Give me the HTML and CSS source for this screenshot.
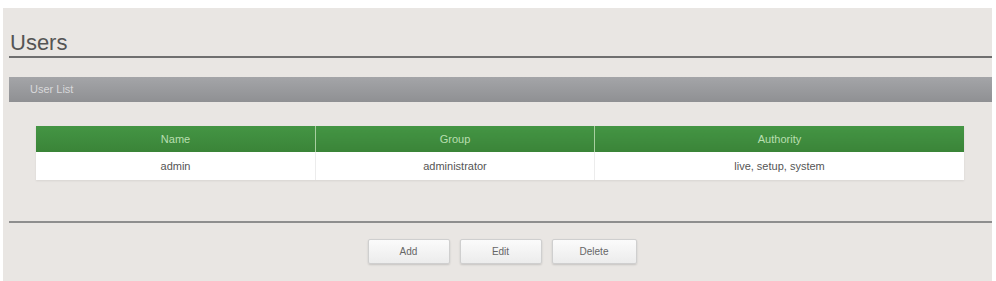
FILE: index.html
```html
<!DOCTYPE html>
<html lang="en">
<head>
    <meta charset="UTF-8">
    <title>Users</title>
    <link rel="stylesheet" href="styles.css">
</head>
<body>
    <div class="panel">
        <h1 class="page-title">Users</h1>

        <div class="section-bar">User List</div>

        <table class="user-table">
            <thead>
                <tr>
                    <th class="col-name">Name</th>
                    <th class="col-group">Group</th>
                    <th>Authority</th>
                </tr>
            </thead>
            <tbody>
                <tr>
                    <td>admin</td>
                    <td>administrator</td>
                    <td>live, setup, system</td>
                </tr>
            </tbody>
        </table>

        <div class="separator"></div>

        <div class="actions">
            <button class="btn">Add</button>
            <button class="btn">Edit</button>
            <button class="btn btn-wide">Delete</button>
        </div>
    </div>
</body>
</html>
```

FILE: styles.css
```css
body {
    margin: 0;
    padding: 0;
    background-color: #fff;
    font-family: "Liberation Sans", Arial, sans-serif;
}

.panel {
    margin: 8px 4px 0 3px;
    height: 273px;
    padding: 0 0 0 6px;
    background-color: #e9e6e3;
    box-sizing: border-box;
}

.page-title {
    margin: 0;
    padding: 22px 0 0 1px;
    font-size: 22px;
    font-weight: normal;
    line-height: 26px;
    color: #555;
    border-bottom: 2px solid #6f6f6f;
}

.section-bar {
    margin-top: 19px;
    height: 25px;
    line-height: 25px;
    padding-left: 21px;
    font-size: 11px;
    color: #d8d8da;
    background: linear-gradient(#a4a5a8, #8f9093);
}

.user-table {
    margin: 24px 0 0 27px;
    width: 928px;
    border-collapse: collapse;
    font-size: 11px;
    background-color: #fff;
    box-shadow: 0 1px 2px rgba(0, 0, 0, 0.08);
}

.user-table th {
    height: 26px;
    padding: 0;
    font-weight: normal;
    color: #b9dfb0;
    background: linear-gradient(#449544, #3a8438);
    border-left: 1px solid #a8cfa0;
}

.user-table th:first-child,
.user-table td:first-child {
    border-left: none;
}

.user-table td {
    height: 28px;
    padding: 0;
    text-align: center;
    color: #555;
    border-left: 1px solid #ececec;
}

.col-name {
    width: 279px;
}

.col-group {
    width: 278px;
}

.separator {
    margin-top: 41px;
    border-top: 2px solid #8e8e8e;
}

.actions {
    display: flex;
    justify-content: center;
    gap: 10px;
    margin-top: 16px;
    padding-left: 3px;
}

.btn {
    width: 82px;
    height: 25px;
    padding: 0;
    font-family: inherit;
    font-size: 10px;
    color: #666;
    background: linear-gradient(#fbfbfb, #ececec);
    border: 1px solid #cfcfcf;
    border-radius: 2px;
    box-shadow: 0 1px 2px rgba(0, 0, 0, 0.15);
}

.btn-wide {
    width: 85px;
}
```
